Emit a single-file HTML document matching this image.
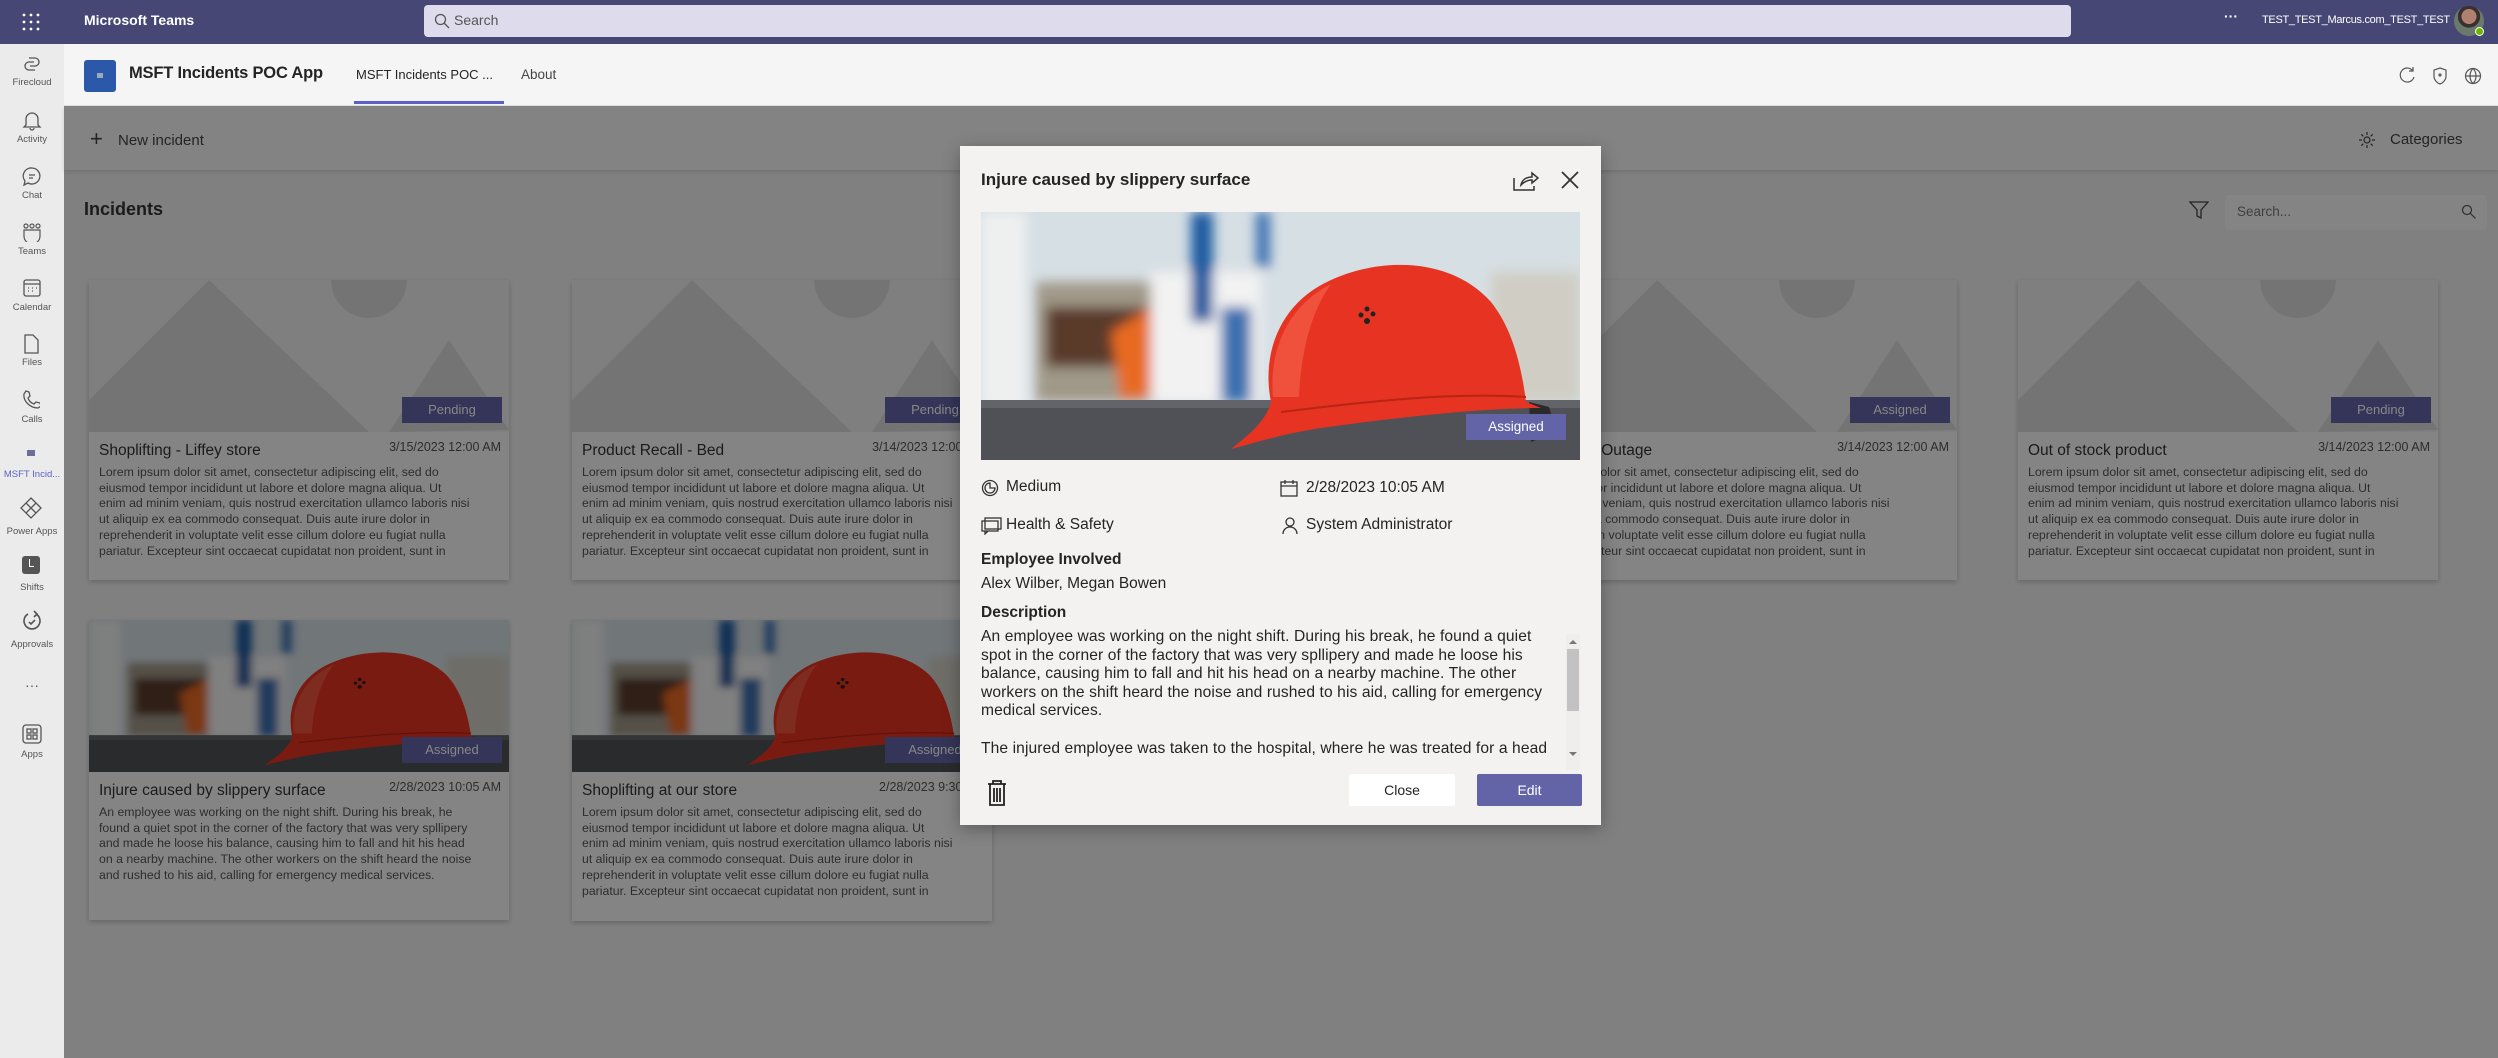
<!DOCTYPE html>
<html><head><meta charset="utf-8"><style>
*{box-sizing:border-box;margin:0;padding:0}
body{width:2498px;height:1058px;overflow:hidden;position:relative;font-family:"Liberation Sans",sans-serif;background:#f2f2f2;color:#242424}
.abs{position:absolute}
#top{left:0;top:0;width:2498px;height:44px;background:#464775}
#rail{left:0;top:44px;width:64px;height:1014px;background:#ebebeb}
.ri{position:absolute;left:0;width:64px;text-align:center;font-size:9.5px;color:#555}
#hdr{left:64px;top:44px;width:2434px;height:62px;background:#f5f5f5;border-bottom:1px solid #e0e0e0}
#content{left:64px;top:106px;width:2434px;height:952px;background:#f2f2f2}
.card{position:absolute;width:420px;background:#fafafa;box-shadow:0 2px 5px rgba(0,0,0,.2)}
.ph{position:relative;height:152px;background:#f0f0f0;overflow:hidden}
.badge{position:absolute;right:7px;bottom:9px;width:100px;height:26px;background:#6264a7;color:#fff;font-size:13px;text-align:center;line-height:26px}
.ct{position:absolute;left:10px;top:10px;font-size:15.5px;color:#333;white-space:nowrap}
.cd{position:absolute;right:8px;top:8px;font-size:12.5px;color:#555}
.cb{position:absolute;left:10px;top:33px;font-size:12.3px;line-height:15.7px;color:#555;white-space:nowrap}
#ov{left:64px;top:106px;width:2434px;height:952px;background:rgba(0,0,0,.47)}
#dlg{left:960px;top:146px;width:641px;height:679px;background:#f3f2f1;box-shadow:0 4px 16px rgba(0,0,0,.3)}
.dt{position:absolute;font-size:15.5px;color:#242424;white-space:nowrap}
</style></head><body>

<div id="top" class="abs">
 <svg class="abs" style="left:22px;top:13px" width="18" height="18"><g fill="#fff"><circle cx="2" cy="2" r="1.4"/><circle cx="9" cy="2" r="1.4"/><circle cx="16" cy="2" r="1.4"/><circle cx="2" cy="9" r="1.4"/><circle cx="9" cy="9" r="1.4"/><circle cx="16" cy="9" r="1.4"/><circle cx="2" cy="16" r="1.4"/><circle cx="9" cy="16" r="1.4"/><circle cx="16" cy="16" r="1.4"/></g></svg>
 <div class="abs" style="left:84px;top:12px;color:#fff;font-size:14px;font-weight:bold">Microsoft Teams</div>
 <div class="abs" style="left:424px;top:5px;width:1647px;height:32px;background:#dedcec;border-radius:4px"></div>
 <svg class="abs" style="left:434px;top:13px" width="16" height="16"><circle cx="6.5" cy="6.5" r="5" fill="none" stroke="#555" stroke-width="1.3"/><path d="M10 10l5 5" stroke="#555" stroke-width="1.3"/></svg>
 <div class="abs" style="left:454px;top:12px;font-size:14px;color:#555">Search</div>
 <div class="abs" style="left:2224px;top:8px;color:#fff;font-size:14px;font-weight:bold">···</div>
 <div class="abs" style="left:2262px;top:14px;width:178px;text-align:right;color:#fff;font-size:11px;letter-spacing:-0.3px;white-space:nowrap">TEST_TEST_Marcus.com_TEST_TEST</div>
 <div class="abs" style="left:2454px;top:6px;width:30px;height:30px;border-radius:50%;background:radial-gradient(circle at 50% 35%,#b08070 0 30%,#3a3030 31% 45%,#6a7a6a 46%)"></div>
 <div class="abs" style="left:2475px;top:27px;width:9px;height:9px;border-radius:50%;background:#6bb700;border:1px solid #fff"></div>
</div>

<div id="rail" class="abs">
 <svg class="abs" style="left:22px;top:10px" width="20" height="20" fill="none" stroke="#555" stroke-width="1.3"><path d="M7 4h6a4 4 0 0 1 0 8H8M13 16H7a4 4 0 0 1 0-8h5"/></svg><div class="ri" style="top:33px">Firecloud</div>
 <svg class="abs" style="left:22px;top:66px" width="20" height="22" fill="none" stroke="#555" stroke-width="1.3"><path d="M4 15V9a6 6 0 0 1 12 0v6l2 2H2zM8 18a2 2 0 0 0 4 0"/></svg><div class="ri" style="top:90px">Activity</div>
 <svg class="abs" style="left:22px;top:122px" width="20" height="22" fill="none" stroke="#555" stroke-width="1.3"><path d="M10 2a8 8 0 1 1-4 15l-4 2 1-4A8 8 0 0 1 10 2zM7 9h6M7 12h4"/></svg><div class="ri" style="top:146px">Chat</div>
 <svg class="abs" style="left:21px;top:178px" width="22" height="20" fill="none" stroke="#555" stroke-width="1.2"><circle cx="5" cy="4" r="2"/><circle cx="11" cy="4" r="2"/><circle cx="17" cy="4" r="2"/><path d="M3 8h16v6a6 6 0 0 1-16 0z"/></svg><div class="ri" style="top:202px">Teams</div>
 <svg class="abs" style="left:23px;top:234px" width="18" height="20" fill="none" stroke="#555" stroke-width="1.3"><rect x="1" y="2" width="16" height="16" rx="2"/><path d="M1 6h16M5 10h1M9 10h1M13 10h1M5 13h1M9 13h1"/></svg><div class="ri" style="top:258px">Calendar</div>
 <svg class="abs" style="left:23px;top:290px" width="16" height="20" fill="none" stroke="#555" stroke-width="1.3"><path d="M2 1h8l5 5v13H2z"/></svg><div class="ri" style="top:313px">Files</div>
 <svg class="abs" style="left:22px;top:346px" width="18" height="20" fill="none" stroke="#555" stroke-width="1.3"><path d="M4 1l3 1 1 4-2 2c1 3 3 5 6 6l2-2 4 1 1 3-3 2C8 18 1 11 2 4z"/></svg><div class="ri" style="top:370px">Calls</div>
 <div class="abs" style="left:27px;top:406px;width:8px;height:6px;background:#6b6d9a"></div><div class="ri" style="top:425px;color:#5b5fc7">MSFT Incid...</div>
 <svg class="abs" style="left:20px;top:453px" width="22" height="22" fill="none" stroke="#555" stroke-width="1.3"><path d="M11 1l10 10-10 10L1 11z M6 6l10 10M16 6L6 16"/></svg><div class="ri" style="top:482px">Power Apps</div>
 <div class="abs" style="left:22px;top:512px;width:18px;height:18px;background:#555;border-radius:3px"></div><div class="abs" style="left:29px;top:515px;width:5px;height:8px;border-left:1.5px solid #fff;border-bottom:1.5px solid #fff"></div><div class="ri" style="top:538px">Shifts</div>
 <svg class="abs" style="left:22px;top:566px" width="20" height="22" fill="none" stroke="#555" stroke-width="1.6"><path d="M14 4a8 8 0 1 1-8 0M12 1l3 3-3 3M7 12l2 2 4-4"/></svg><div class="ri" style="top:595px">Approvals</div>
 <div class="ri" style="top:633px;font-size:14px">···</div>
 <svg class="abs" style="left:22px;top:680px" width="20" height="20" fill="none" stroke="#555" stroke-width="1.3"><rect x="1" y="1" width="18" height="18" rx="3"/><rect x="5" y="5" width="4" height="4"/><rect x="11" y="5" width="4" height="4"/><rect x="5" y="11" width="4" height="4"/><rect x="11" y="11" width="4" height="4"/></svg><div class="ri" style="top:705px">Apps</div>
</div>

<div id="hdr" class="abs">
 <div class="abs" style="left:20px;top:16px;width:32px;height:32px;background:#2b58a8;border-radius:3px"></div>
 <div class="abs" style="left:33px;top:29px;width:6px;height:5px;background:#9ab"></div>
 <div class="abs" style="left:65px;top:20px;font-size:16.5px;font-weight:bold;letter-spacing:-0.2px">MSFT Incidents POC App</div>
 <div class="abs" style="left:292px;top:23px;font-size:13px">MSFT Incidents POC ...</div>
 <div class="abs" style="left:290px;top:57px;width:150px;height:3px;background:#5b5fc7"></div>
 <div class="abs" style="left:457px;top:23px;font-size:13.5px;color:#444">About</div>
 <svg class="abs" style="left:2335px;top:22px" width="110" height="20" fill="none" stroke="#555" stroke-width="1.2"><path d="M14 5a7 7 0 1 0 1 6M14 1v4h-4"/><path d="M41 2l6 2v6c0 4-3 7-6 8-3-1-6-4-6-8V4z"/><circle cx="41" cy="9" r="1"/><circle cx="74" cy="10" r="7.5"/><path d="M66.5 10h15M74 2.5c-4 4-4 11 0 15M74 2.5c4 4 4 11 0 15"/></svg>
</div>

<div id="content" class="abs">
 <div class="abs" style="left:0;top:0;width:2434px;height:64px;background:#f8f8f8;box-shadow:0 2px 4px rgba(0,0,0,.12)"></div>
 <div class="abs" style="left:26px;top:20px;font-size:22px;color:#444">+</div>
 <div class="abs" style="left:54px;top:26px;font-size:15px;color:#444">New incident</div>
 <svg class="abs" style="left:2294px;top:25px" width="18" height="18" fill="none" stroke="#444" stroke-width="1.2"><circle cx="9" cy="9" r="3"/><path d="M9 1v3M9 14v3M1 9h3M14 9h3M3.3 3.3l2 2M12.7 12.7l2 2M3.3 14.7l2-2M12.7 5.3l2-2"/></svg>
 <div class="abs" style="left:2326px;top:25px;font-size:15px;color:#444">Categories</div>
 <div class="abs" style="left:20px;top:93px;font-size:18px;font-weight:bold;color:#333">Incidents</div>
 <svg class="abs" style="left:2125px;top:94px" width="20" height="20" fill="none" stroke="#444" stroke-width="1.3"><path d="M1 2h18l-7 8v8l-4-2v-6z"/></svg>
 <div class="abs" style="left:2161px;top:89px;width:262px;height:35px;background:#fafafa;border-radius:3px"></div>
 <div class="abs" style="left:2173px;top:98px;font-size:13.5px;color:#777">Search...</div>
 <svg class="abs" style="left:2397px;top:98px" width="16" height="16" fill="none" stroke="#555" stroke-width="1.2"><circle cx="6" cy="6" r="4.5"/><path d="M9.5 9.5l5 5"/></svg>
</div>

<svg width="0" height="0" style="position:absolute"><defs>
<symbol id="phs" viewBox="0 0 420 152"><rect width="420" height="152" fill="#f0f0f0"/><path d="M0 120L120 0L280 152H0z" fill="#dcdcdc"/><path d="M300 152L360 60L420 150z" fill="#dcdcdc"/><circle cx="280" cy="0" r="38" fill="#dcdcdc"/></symbol>
<filter id="bl"><feGaussianBlur stdDeviation="6"/></filter>
<symbol id="hel" viewBox="0 0 599 248" preserveAspectRatio="none">
 <rect width="599" height="248" fill="#d6dfe4"/>
 <g filter="url(#bl)">
  <rect x="0" y="0" width="45" height="200" fill="#eef0f0"/>
  <rect x="55" y="70" width="180" height="120" fill="#a09888"/>
  <rect x="65" y="95" width="110" height="60" fill="#5a3a2a"/>
  <path d="M130 120l40-25 25 85-55 8z" fill="#e86a20"/>
  <rect x="170" y="60" width="110" height="130" fill="#f2f2f2"/>
  <rect x="210" y="0" width="22" height="110" fill="#1c5aa0"/>
  <rect x="275" y="0" width="14" height="55" fill="#3a70b0"/>
  <rect x="240" y="95" width="30" height="95" fill="#3a70b0"/>
  <rect x="510" y="60" width="89" height="130" fill="#d0cec4"/>
 </g>
 <rect x="0" y="188" width="599" height="60" fill="#505156"/>
 <rect x="0" y="188" width="599" height="8" fill="#707176" opacity=".6"/>
 <path d="M548 190l20 5 8 25-26 10z" fill="#2a2a2a"/>
 <path d="M250 237C265 225 285 210 290 190C280 140 300 90 350 68C400 45 470 45 510 90C530 115 540 150 545 190L560 196C500 196 420 205 340 216C300 222 270 232 250 237Z" fill="#e63322"/>
 <path d="M292 185C288 140 305 95 350 72C330 100 320 140 318 185z" fill="#f25e48" opacity=".7"/>
 <path d="M300 200C380 190 470 180 545 185" stroke="#b82515" stroke-width="2" fill="none"/>
 <circle cx="380" cy="103" r="2.5" fill="#222"/><circle cx="386" cy="97" r="2.5" fill="#222"/><circle cx="392" cy="102" r="2.5" fill="#222"/><circle cx="386" cy="109" r="3" fill="#222"/>
</symbol></defs></svg>

<div class="card" style="left:89px;top:280px;height:300px"><div class="ph"><svg width="420" height="152"><use href="#phs"/></svg><div class="badge">Pending</div></div><div style="position:relative"><div class="ct">Shoplifting - Liffey store</div><div class="cd">3/15/2023 12:00 AM</div><div class="cb">Lorem ipsum dolor sit amet, consectetur adipiscing elit, sed do<br>eiusmod tempor incididunt ut labore et dolore magna aliqua. Ut<br>enim ad minim veniam, quis nostrud exercitation ullamco laboris nisi<br>ut aliquip ex ea commodo consequat. Duis aute irure dolor in<br>reprehenderit in voluptate velit esse cillum dolore eu fugiat nulla<br>pariatur. Excepteur sint occaecat cupidatat non proident, sunt in</div></div></div>
<div class="card" style="left:572px;top:280px;height:300px"><div class="ph"><svg width="420" height="152"><use href="#phs"/></svg><div class="badge">Pending</div></div><div style="position:relative"><div class="ct">Product Recall - Bed</div><div class="cd">3/14/2023 12:00 AM</div><div class="cb">Lorem ipsum dolor sit amet, consectetur adipiscing elit, sed do<br>eiusmod tempor incididunt ut labore et dolore magna aliqua. Ut<br>enim ad minim veniam, quis nostrud exercitation ullamco laboris nisi<br>ut aliquip ex ea commodo consequat. Duis aute irure dolor in<br>reprehenderit in voluptate velit esse cillum dolore eu fugiat nulla<br>pariatur. Excepteur sint occaecat cupidatat non proident, sunt in</div></div></div>
<div class="card" style="left:1055px;top:280px;height:300px"><div class="ph"><svg width="420" height="152"><use href="#phs"/></svg><div class="badge">Pending</div></div></div>
<div class="card" style="left:1537px;top:280px;height:300px"><div class="ph"><svg width="420" height="152"><use href="#phs"/></svg><div class="badge">Assigned</div></div><div style="position:relative"><div class="ct" style="left:16px">Power Outage</div><div class="cd">3/14/2023 12:00 AM</div><div class="cb" style="left:-18px">Lorem ipsum dolor sit amet, consectetur adipiscing elit, sed do<br>eiusmod tempor incididunt ut labore et dolore magna aliqua. Ut<br>enim ad minim veniam, quis nostrud exercitation ullamco laboris nisi<br>ut aliquip ex ea commodo consequat. Duis aute irure dolor in<br>reprehenderit in voluptate velit esse cillum dolore eu fugiat nulla<br>pariatur. Excepteur sint occaecat cupidatat non proident, sunt in</div></div></div>
<div class="card" style="left:2018px;top:280px;height:300px"><div class="ph"><svg width="420" height="152"><use href="#phs"/></svg><div class="badge">Pending</div></div><div style="position:relative"><div class="ct">Out of stock product</div><div class="cd">3/14/2023 12:00 AM</div><div class="cb">Lorem ipsum dolor sit amet, consectetur adipiscing elit, sed do<br>eiusmod tempor incididunt ut labore et dolore magna aliqua. Ut<br>enim ad minim veniam, quis nostrud exercitation ullamco laboris nisi<br>ut aliquip ex ea commodo consequat. Duis aute irure dolor in<br>reprehenderit in voluptate velit esse cillum dolore eu fugiat nulla<br>pariatur. Excepteur sint occaecat cupidatat non proident, sunt in</div></div></div>

<div class="card" style="left:89px;top:620px;height:300px"><div class="ph"><svg width="420" height="152"><use href="#hel"/></svg><div class="badge">Assigned</div></div><div style="position:relative"><div class="ct">Injure caused by slippery surface</div><div class="cd">2/28/2023 10:05 AM</div><div class="cb">An employee was working on the night shift. During his break, he<br>found a quiet spot in the corner of the factory that was very spllipery<br>and made he loose his balance, causing him to fall and hit his head<br>on a nearby machine. The other workers on the shift heard the noise<br>and rushed to his aid, calling for emergency medical services.</div></div></div>
<div class="card" style="left:572px;top:620px;height:301px"><div class="ph"><svg width="420" height="152"><use href="#hel"/></svg><div class="badge">Assigned</div></div><div style="position:relative"><div class="ct">Shoplifting at our store</div><div class="cd">2/28/2023 9:30 AM</div><div class="cb">Lorem ipsum dolor sit amet, consectetur adipiscing elit, sed do<br>eiusmod tempor incididunt ut labore et dolore magna aliqua. Ut<br>enim ad minim veniam, quis nostrud exercitation ullamco laboris nisi<br>ut aliquip ex ea commodo consequat. Duis aute irure dolor in<br>reprehenderit in voluptate velit esse cillum dolore eu fugiat nulla<br>pariatur. Excepteur sint occaecat cupidatat non proident, sunt in</div></div></div>

<div id="ov" class="abs"></div>

<div id="dlg" class="abs">
 <div class="dt" style="left:21px;top:24px;font-size:17px;font-weight:bold;color:#242424">Injure caused by slippery surface</div>
 <svg class="abs" style="left:553px;top:24px" width="26" height="22" fill="none" stroke="#333" stroke-width="1.5"><path d="M1 8v12h20v-4M8 15c1-5 5-8 11-8V3l6 5-6 5V10c-5 0-8 2-11 5z"/></svg>
 <svg class="abs" style="left:600px;top:24px" width="20" height="20" stroke="#333" stroke-width="1.8"><path d="M2 2l16 16M18 2L2 18"/></svg>
 <svg class="abs" style="left:21px;top:66px" width="599" height="248"><use href="#hel" width="599" height="248"/></svg>
 <div class="abs" style="left:506px;top:268px;width:100px;height:26px;background:#6264a7;color:#fff;font-size:13.5px;text-align:center;line-height:26px">Assigned</div>
 <svg class="abs" style="left:21px;top:333px" width="18" height="18" fill="none" stroke="#333" stroke-width="1.3"><circle cx="9" cy="9" r="7.5"/><path d="M9 9V4a5 5 0 1 0 5 5z"/></svg>
 <div class="dt" style="left:46px;top:332px">Medium</div>
 <svg class="abs" style="left:320px;top:333px" width="18" height="18" fill="none" stroke="#333" stroke-width="1.3"><rect x="1" y="3" width="16" height="14"/><path d="M1 7h16M5 1v4M13 1v4"/></svg>
 <div class="dt" style="left:346px;top:333px">2/28/2023 10:05 AM</div>
 <svg class="abs" style="left:21px;top:371px" width="21" height="18" fill="none" stroke="#333" stroke-width="1.3"><rect x="4" y="1" width="16" height="11"/><rect x="1" y="4" width="16" height="10"/><path d="M4 14v3l3-3"/></svg>
 <div class="dt" style="left:46px;top:370px">Health &amp; Safety</div>
 <svg class="abs" style="left:322px;top:371px" width="16" height="18" fill="none" stroke="#333" stroke-width="1.3"><circle cx="8" cy="5" r="4"/><path d="M1 17c0-4 3-7 7-7s7 3 7 7"/></svg>
 <div class="dt" style="left:346px;top:370px">System Administrator</div>
 <div class="dt" style="left:21px;top:405px;font-weight:bold">Employee Involved</div>
 <div class="dt" style="left:21px;top:429px">Alex Wilber, Megan Bowen</div>
 <div class="dt" style="left:21px;top:458px;font-weight:bold">Description</div>
 <div class="dt" style="left:21px;top:482px;line-height:18.6px;font-size:15.6px;letter-spacing:0.1px">An employee was working on the night shift. During his break, he found a quiet<br>spot in the corner of the factory that was very spllipery and made he loose his<br>balance, causing him to fall and hit his head on a nearby machine. The other<br>workers on the shift heard the noise and rushed to his aid, calling for emergency<br>medical services.<br><br>The injured employee was taken to the hospital, where he was treated for a head</div>
 <div class="abs" style="left:606px;top:488px;width:14px;height:136px;background:#efeeed"></div>
 <div class="abs" style="left:607px;top:503px;width:12px;height:62px;background:#c2c2c2"></div>
 <div class="abs" style="left:609px;top:490px;width:0;height:0;border:4px solid transparent;border-bottom-color:#777"></div>
 <div class="abs" style="left:609px;top:606px;width:0;height:0;border:4px solid transparent;border-top-color:#777"></div>
 <svg class="abs" style="left:27px;top:634px" width="20" height="26" fill="none" stroke="#222" stroke-width="1.8"><path d="M1 4h18M6 4V1h8v3M3 4v21h14V4M7 8v14M10 8v14M13 8v14"/></svg>
 <div class="abs" style="left:389px;top:628px;width:106px;height:32px;background:#fff;border-radius:2px;text-align:center;line-height:32px;font-size:14px;color:#242424">Close</div>
 <div class="abs" style="left:517px;top:628px;width:105px;height:32px;background:#6264a7;border-radius:2px;text-align:center;line-height:32px;font-size:14px;color:#fff">Edit</div>
</div>
</body></html>
